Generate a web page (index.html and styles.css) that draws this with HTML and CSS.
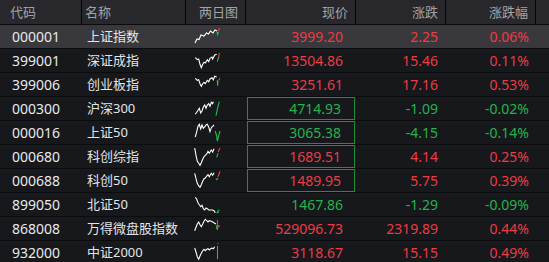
FILE: index.html
```html
<!DOCTYPE html>
<html lang="zh-CN">
<head>
<meta charset="utf-8">
<title>指数行情</title>
<link rel="stylesheet" href="styles.css">
</head>
<body>
<div class="table">
  <div class="grid head">
    <div class="hc left code-h">代码</div>
    <div class="hc left name-h">名称</div>
    <div class="hc right">两日图</div>
    <div class="hc right">现价</div>
    <div class="hc right">涨跌</div>
    <div class="hc right">涨跌幅</div>
    <div class="hc end"></div>
  </div>

  <div class="grid row active">
    <div class="code">000001</div><div class="name">上证指数</div>
    <div class="chart"><svg viewBox="0 0 30 23" width="30" height="23"><polyline class="w" points="1,18 3,14 5,14.5 7,10 10,11 12.5,8 14.5,9 16.5,6 19,8 21,5 23,6"/><polyline class="g" points="23,6.5 23.5,9.5 24.5,7"/><polyline class="r" points="24.5,6 25.5,3"/></svg></div>
    <div class="price up">3999.20</div><div class="chg up">2.25</div><div class="pct up">0.06%</div><div></div>
  </div>

  <div class="grid row">
    <div class="code">399001</div><div class="name">深证成指</div>
    <div class="chart"><svg viewBox="0 0 30 23" width="30" height="23"><polyline class="w" points="1.3,8.7 3.3,10.7 4.7,10 6,15.3 7.3,18.7 8.7,15.3 10,13.3 11.3,14 13.3,10.7 14.7,12.7 16,9.3 18,8 18.7,10 20.7,6 22.7,5.3"/><polyline class="g" points="23.3,12.7 24.7,8"/><polyline class="r" points="24.7,8 25.3,4"/></svg></div>
    <div class="price up">13504.86</div><div class="chg up">15.46</div><div class="pct up">0.11%</div><div></div>
  </div>

  <div class="grid row">
    <div class="code">399006</div><div class="name">创业板指</div>
    <div class="chart"><svg viewBox="0 0 30 23" width="30" height="23"><polyline class="w" points="1.3,5.3 3.3,7.3 4.7,6.7 6,10.7 7.3,13.3 8.7,10.7 10,9.3 11.3,10.7 13.3,7.3 14.7,8.7 16,6 18,4.7 19.3,6.7 20.7,3.3 22.7,4"/><polyline class="g" points="23.3,7 23.6,12.7 24,8"/><polyline class="r" points="24.7,7.3 26,5.3"/></svg></div>
    <div class="price up">3251.61</div><div class="chg up">17.16</div><div class="pct up">0.53%</div><div></div>
  </div>

  <div class="grid row">
    <div class="code">000300</div><div class="name">沪深300</div>
    <div class="chart"><svg viewBox="0 0 30 23" width="30" height="23"><polyline class="w" points="1.3,17.3 2.7,15.3 4,13.3 5.3,11.3 6.7,16 8,14 9.3,10 10.7,8 12,11.3 13.3,8 14.7,6.7 16,9.3 17.3,5.3 18.7,6.7 19.3,4.7"/><polyline class="g" points="22,18.7 23.3,12.7 24,9.3 25.3,4.7"/></svg></div>
    <div class="price down"><span class="box">4714.93</span></div><div class="chg down">-1.09</div><div class="pct down">-0.02%</div><div></div>
  </div>

  <div class="grid row">
    <div class="code">000016</div><div class="name">上证50</div>
    <div class="chart"><svg viewBox="0 0 30 23" width="30" height="23"><polyline class="w" points="1.3,16 2.7,10.7 4,5.3 5.3,3.3 6.7,8 8,4 9.3,7.3 10.7,6 12,4 13.3,3.3 14.7,6 16,10.7 17.3,6.7 18.7,5.3 20,4"/><polyline class="g" points="21.3,10 22.7,15.3 23.3,20 24.7,14.7 26,10"/></svg></div>
    <div class="price down"><span class="box">3065.38</span></div><div class="chg down">-4.15</div><div class="pct down">-0.14%</div><div></div>
  </div>

  <div class="grid row">
    <div class="code">000680</div><div class="name">科创综指</div>
    <div class="chart"><svg viewBox="0 0 30 23" width="30" height="23"><polyline class="w" points="0.7,3 2,10.3 3.3,16.3 4.7,18.3 6,20.3 7.3,17.7 8.7,14.3 10,11.7 11.3,10.3 12.7,9 14,6.3 15.3,8.3 17.3,5 18.7,7 20,3.7"/><polyline class="g" points="22.7,12.3 24,8.3"/><polyline class="r" points="24,7 26,3"/></svg></div>
    <div class="price up"><span class="box">1689.51</span></div><div class="chg up">4.14</div><div class="pct up">0.25%</div><div></div>
  </div>

  <div class="grid row">
    <div class="code">000688</div><div class="name">科创50</div>
    <div class="chart"><svg viewBox="0 0 30 23" width="30" height="23"><polyline class="w" points="0.7,4.3 2,9.7 3.3,14.3 4.7,17 6,18.3 7.3,15.7 8.7,12.3 10,9.7 11.3,9 12.7,7 14,5.7 15.3,7.7 17.3,4.3 18.7,6.3 20,3.7"/><polyline class="g" points="22,11 24,9"/><polyline class="r" points="24,7.7 26,2.3"/></svg></div>
    <div class="price up"><span class="box">1489.95</span></div><div class="chg up">5.75</div><div class="pct up">0.39%</div><div></div>
  </div>

  <div class="grid row">
    <div class="code">899050</div><div class="name">北证50</div>
    <div class="chart"><svg viewBox="0 0 30 23" width="30" height="23"><polyline class="w" points="1.3,4.3 2.7,6.3 4,9.7 5.3,11.7 6.7,13.7 8,12.3 9.3,15.7 10.7,17 12,15 13.3,15.7 14.7,17 16.7,17 18.7,17 20,17.7 21.3,19.7"/><polyline class="g" points="22.7,20.3 24,18.3 25.3,17"/><polyline class="g" points="23,19 24.5,19.8"/></svg></div>
    <div class="price down">1467.86</div><div class="chg down">-1.29</div><div class="pct down">-0.09%</div><div></div>
  </div>

  <div class="grid row">
    <div class="code">868008</div><div class="name">万得微盘股指数</div>
    <div class="chart"><svg viewBox="0 0 30 23" width="30" height="23"><polyline class="w" points="0.7,13.7 2,10.3 3.3,7 4.7,5 6,7.7 7.3,9.7 8.7,7 10,4.3 11.3,2.3 12.7,3.7 14,5 15.3,3.7 17.3,4.3 18.7,5 20.7,6.3 22,7"/><polyline class="g" points="22.7,8.3 22.7,12.3"/><polyline class="r" points="23.5,3 23.5,13"/><polyline class="r" points="24,8.3 25.3,9.3 24,10.3"/></svg></div>
    <div class="price up">529096.73</div><div class="chg up">2319.89</div><div class="pct up">0.44%</div><div></div>
  </div>

  <div class="grid row">
    <div class="code">932000</div><div class="name">中证2000</div>
    <div class="chart"><svg viewBox="0 0 30 23" width="30" height="23"><polyline class="w" points="0.7,7 2,11 3.3,15.7 4.7,18.3 6,15 7.3,12.3 8.7,9.7 10,8.3 11.3,9.7 12.7,8.3 14,7.7 15.3,9 16.7,7.7 18,7 19.3,7.7 20.7,5.7"/><polyline class="g" points="23.5,5 23.5,18.3"/><polyline class="r" points="23.5,3 24.3,2"/></svg></div>
    <div class="price up">3118.67</div><div class="chg up">15.15</div><div class="pct up">0.49%</div><div></div>
  </div>
</div>
</body>
</html>
```

FILE: styles.css
```css
html, body {
  margin: 0;
  padding: 0;
  background: #16181c;
  overflow: hidden;
}

body {
  width: 549px;
  height: 262px;
  font-family: "Noto Sans", "Noto Sans CJK SC", sans-serif;
  font-size: 14px;
  line-height: 1;
}

.grid {
  display: grid;
  grid-template-columns: 82px 104px 60px 110px 90px 90px 13px;
}

.head {
  height: 24px;
  background: #28282c;
  border-bottom: 1px solid #0c0c0e;
  color: #a3a3a3;
  font-size: 13px;
}

.hc {
  display: flex;
  align-items: center;
  border-right: 1px solid #050506;
  box-sizing: border-box;
  white-space: nowrap;
}

.hc.end {
  border-right: none;
}

.hc.left {
  justify-content: flex-start;
}

.hc.right {
  justify-content: flex-end;
  padding-right: 7px;
}

.code-h {
  padding-left: 10px;
}

.name-h {
  padding-left: 3px;
}

.row {
  height: 23px;
  border-bottom: 1px solid #0b0c0e;
}

.row.active {
  background: #39393d;
}

.row > div {
  display: flex;
  align-items: center;
  white-space: nowrap;
  box-sizing: border-box;
}

.code {
  padding-left: 12px;
  color: #e8e8ea;
}

.name {
  padding-left: 5px;
  color: #e4e4e6;
  font-size: 13px;
}

.chart {
  padding-left: 8px;
}

.chart svg {
  display: block;
}

.chart polyline {
  fill: none;
  stroke-width: 1.1;
  stroke-linejoin: miter;
}

.chart .w { stroke: #ffffff; }
.chart .g { stroke: #20c24a; }
.chart .r { stroke: #ff3a3a; }

.price, .chg, .pct {
  justify-content: flex-end;
}

.price {
  padding: 0 1px;
}

.price > .box,
.price:not(:has(.box)) {
  padding-right: 13px;
}

.box {
  display: flex;
  align-items: center;
  justify-content: flex-end;
  width: 100%;
  height: 100%;
  box-sizing: border-box;
  border: 1px solid #1f8f3a;
  padding-right: 12px;
}

.chg {
  padding-right: 8px;
}

.pct {
  padding-right: 7px;
}

.up { color: #ee3a43; }
.down { color: #24b34a; }
```
